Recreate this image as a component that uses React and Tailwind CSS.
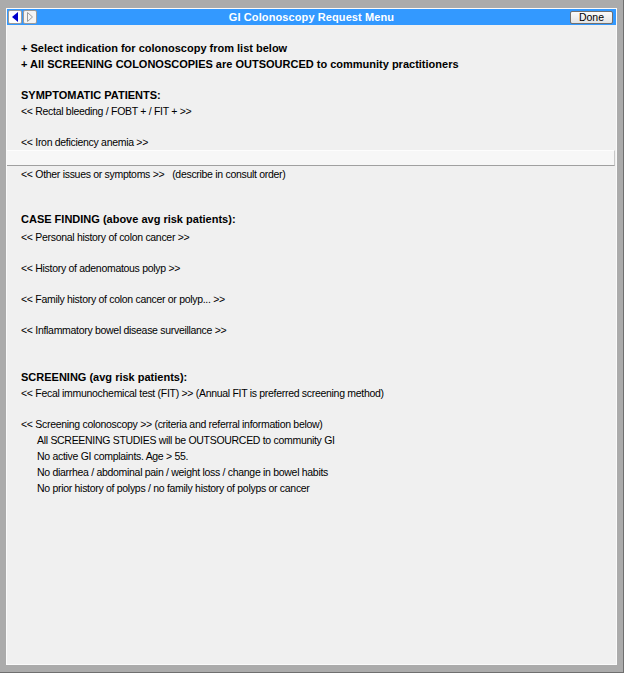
import React from "react";

const F = { fontFamily: '"Liberation Sans", Arial, sans-serif' };

function Line({ children, bold, indent, className = "" }) {
  return (
    <div
      className={`h-[16px] leading-[16px] whitespace-nowrap text-black ${
        bold ? "font-bold text-[11px]" : "text-[10.5px] tracking-[-0.3px]"
      } ${indent ? "pl-[16px]" : ""} ${className}`}
    >
      {children}
    </div>
  );
}

export default function App() {
  return (
    <div
      className="w-[624px] h-[673px] bg-[#ababab] pt-[8px] pl-[6px] pr-[6px] pb-[2px] border-b-[1px] border-r-[1px] border-[#6f6f6f] flex flex-col"
      style={F}
    >
      <div className="flex-1 flex flex-col bg-[#f0f0f0] border border-[#fafafa] mb-[5px]">
        {/* Title bar */}
        <div className="h-[16px] bg-[#3399ff] flex items-center px-[1px]">
          <div className="w-[45px] flex items-center gap-[1px]">
            <div className="w-[14px] h-[14px] bg-white border border-[#9a9a9a] rounded-[2px] flex items-center justify-center">
              <svg width="8" height="10" viewBox="0 0 8 10">
                <polygon points="7,0 7,10 1,5" fill="#0000cc" />
              </svg>
            </div>
            <div className="w-[14px] h-[14px] bg-[#f4f4f4] border border-[#9a9a9a] rounded-[2px] flex items-center justify-center">
              <svg width="8" height="10" viewBox="0 0 8 10">
                <polygon points="1.5,0.5 1.5,9.5 6.5,5" fill="none" stroke="#9a9a9a" strokeWidth="1" />
              </svg>
            </div>
          </div>
          <div className="flex-1 text-center text-white font-bold text-[11px] leading-[16px] tracking-[0.1px]">
            GI Colonoscopy Request Menu
          </div>
          <div className="w-[45px] flex justify-end">
            <div className="w-[43px] h-[13px] mr-[2px] bg-gradient-to-b from-[#fbfbfb] to-[#e3e3e3] border border-[#707070] rounded-[2px] text-[10.5px] leading-[11px] text-center text-black">
              Done
            </div>
          </div>
        </div>

        {/* Content */}
        <div className="flex flex-col pt-[15px]">
          <div className="pl-[14px]">
            <Line bold>+ Select indication for colonoscopy from list below</Line>
            <Line bold>+ All SCREENING COLONOSCOPIES are OUTSOURCED to community practitioners</Line>
            <Line bold className="mt-[15px]">SYMPTOMATIC PATIENTS:</Line>
            <Line>&lt;&lt; Rectal bleeding / FOBT + / FIT + &gt;&gt;</Line>
            <Line className="mt-[15px]">&lt;&lt; Iron deficiency anemia &gt;&gt;</Line>
          </div>
          <div className="h-[16px] bg-[#f7f7f7] border-t border-[#fdfdfd] border-b border-b-[#a0a0a0] border-r border-r-[#c8c8c8] mr-[1px]" />
          <div className="pl-[14px]">
            <Line>
              &lt;&lt; Other issues or symptoms &gt;&gt;&nbsp;&nbsp; (describe in consult order)
            </Line>
            <Line bold className="mt-[29px]">CASE FINDING (above avg risk patients):</Line>
            <Line className="mt-[2px]">&lt;&lt; Personal history of colon cancer &gt;&gt;</Line>
            <Line className="mt-[15px]">&lt;&lt; History of adenomatous polyp &gt;&gt;</Line>
            <Line className="mt-[15px]">&lt;&lt; Family history of colon cancer or polyp... &gt;&gt;</Line>
            <Line className="mt-[15px]">&lt;&lt; Inflammatory bowel disease surveillance &gt;&gt;</Line>
            <Line bold className="mt-[31px]">SCREENING (avg risk patients):</Line>
            <Line>&lt;&lt; Fecal immunochemical test (FIT) &gt;&gt; (Annual FIT is preferred screening method)</Line>
            <Line className="mt-[15px]">&lt;&lt; Screening colonoscopy &gt;&gt; (criteria and referral information below)</Line>
            <Line indent>All SCREENING STUDIES will be OUTSOURCED to community GI</Line>
            <Line indent>No active GI complaints. Age &gt; 55.</Line>
            <Line indent>No diarrhea / abdominal pain / weight loss / change in bowel habits</Line>
            <Line indent>No prior history of polyps / no family history of polyps or cancer</Line>
          </div>
        </div>
      </div>
    </div>
  );
}
